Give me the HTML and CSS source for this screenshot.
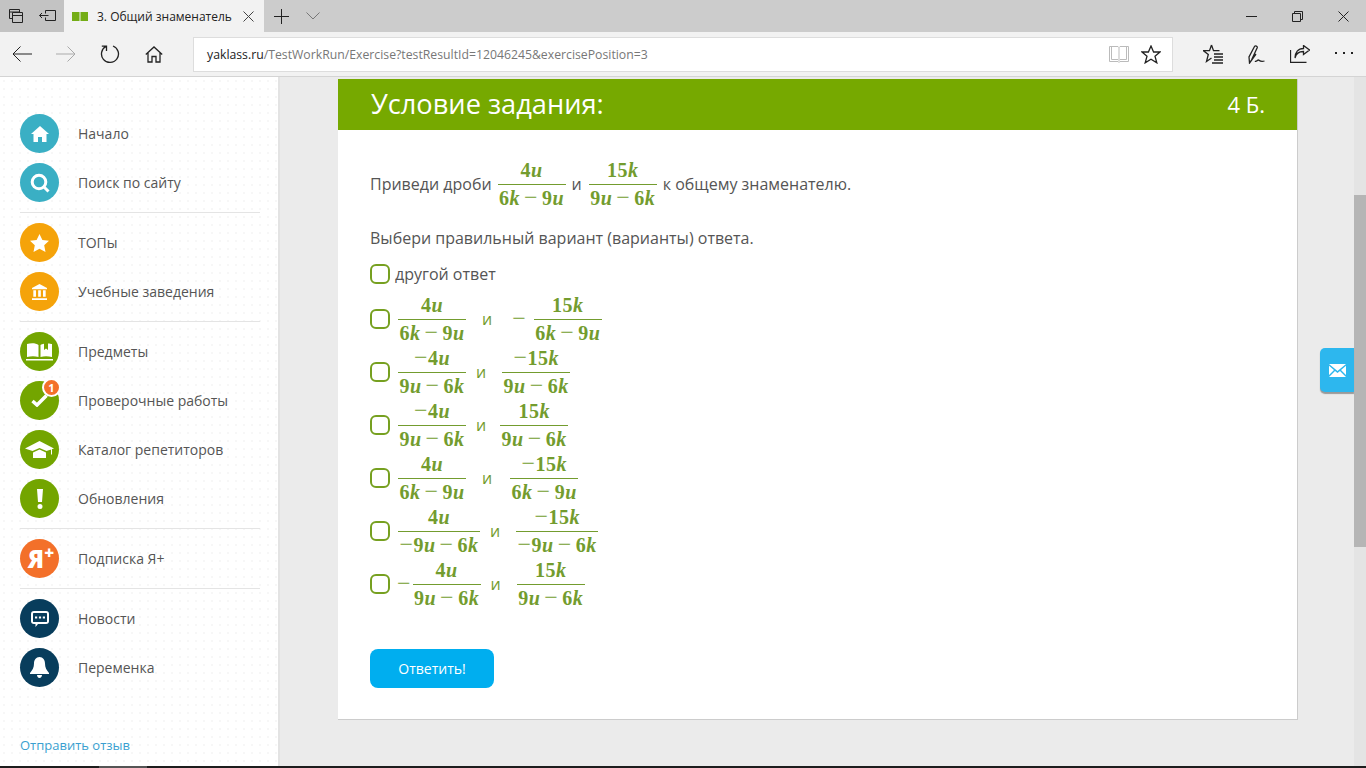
FILE: index.html
```html
<!DOCTYPE html>
<html lang="ru">
<head>
<meta charset="utf-8">
<title>3. Общий знаменатель</title>
<link rel="stylesheet" href="styles.css">
</head>
<body>
<header class="tabstrip">
  <div class="tabctl">
    <span class="tb32"><svg width="18" height="18" viewBox="0 0 18 18" class="ic"><path d="M2.5 2.5h10v3M2.5 2.500v9h3M2.500 5h10M5.500 5.500h10v10h-10zM5.500 8.500h10"/></svg></span>
    <span class="tb32"><svg width="18" height="14" viewBox="0 0 18 14" class="ic"><path d="M6.500 1.500h10v10h-10v-3M6.500 1.500v3M.5 6.500h9M3 4l-2.500 2.500L3 9"/></svg></span>
  </div>
  <div class="tab">
    <svg width="16" height="9" viewBox="0 0 16 9" class="tabicon"><path d="M0 0h7.500v9H0zM8.500 0H16v9H8.500z" fill="#74ad16"/></svg>
    <span class="tabtitle">3. Общий знаменатель</span>
    <svg width="11" height="11" viewBox="0 0 11 11" class="ic tabclose"><path d="M.5.500l10 10M10.500.500l-10 10"/></svg>
  </div>
  <span class="newtab"><svg width="15" height="15" viewBox="0 0 15 15" class="ic"><path d="M7.500 0v15M0 7.500h15"/></svg></span>
  <span class="tabmenu"><svg width="14" height="8" viewBox="0 0 14 8" class="ic soft"><path d="M.5.500L7 7l6.500-6.500"/></svg></span>
  <div class="winctl">
    <span class="wb"><svg width="11" height="1" viewBox="0 0 11 1" class="ic"><path d="M0 .5h11"/></svg></span>
    <span class="wb"><svg width="11" height="11" viewBox="0 0 11 11" class="ic"><path d="M.5 2.500h8v8h-8zM2.500 2.500v-2h8v8h-2"/></svg></span>
    <span class="wb"><svg width="11" height="11" viewBox="0 0 11 11" class="ic"><path d="M.5.500l10 10M10.500.500l-10 10"/></svg></span>
  </div>
</header>

<nav class="toolbar">
  <span class="nb"><svg width="20" height="16" viewBox="0 0 20 16" class="ic"><path d="M20 8H1M8.500.5L1 8l7.500 7.500"/></svg></span>
  <span class="nb"><svg width="20" height="16" viewBox="0 0 20 16" class="ic off"><path d="M0 8h19M11.500.5L19 8l-7.500 7.500"/></svg></span>
  <span class="nb"><svg width="20" height="20" viewBox="0 0 20 20" class="ic med"><path d="M6.500 2.200A8.500 8.500 0 1 0 13 2M6.500 7V2.200H1.800"/></svg></span>
  <span class="nb"><svg width="18" height="17" viewBox="0 0 18 17" class="ic med"><path d="M.8 8.500L9 1l8.200 7.500M3 7v9h4v-5.500h4V16h4V7"/></svg></span>
  <div class="address">
    <span class="url"><span class="host">yaklass.ru</span>/TestWorkRun/Exercise?testResultId=12046245&amp;exercisePosition=3</span>
    <svg width="20" height="17" viewBox="0 0 20 17" class="ic faint"><path d="M.5.500h8.500l1 1 1-1h8.500v15H11l-1 1-1-1H.5zM10 1.500v14M2.500.5v13H9M17.500.5v13H11"/></svg>
    <svg width="20" height="19" viewBox="0 0 20 19" class="ic med addr-star"><path d="M10 1l2.600 6H19l-5 4.200 1.800 6.600L10 14.200l-5.800 3.600L6 11.200 1 7h6.400z"/></svg>
  </div>
  <span class="nb hub"><svg width="20" height="20" viewBox="0 0 20 20" class="ic med"><path d="M8.500 1l2 5.700h6M8.500 1l-2 5.700H.5l4.800 3.800-1.800 7L8.500 14M11 10h9M11 13h9M11 16h9M9 19h11"/></svg></span>
  <span class="nb pen"><svg width="18" height="19" viewBox="0 0 18 19" class="ic med"><path d="M1.500 18L1 12 6.500 1.500c.8-1.300 3.200-.3 2.700 1.200L3.500 15zM1.500 18L8 9M7 16c1.500 1.500 2.500-2 4-.8s2 1.800 5.500.8"/></svg></span>
  <span class="nb share"><svg width="20" height="18" viewBox="0 0 20 18" class="ic med"><path d="M.5 5v12.500h16M5 13c1-4.500 4-6.500 8.500-6.500V9.500L19.500 5 13.500.5v3C8 3.500 5 7.500 5 13z"/></svg></span>
  <span class="nb more"><span class="dot"></span><span class="dot"></span><span class="dot"></span></span>
</nav>

<div class="page">
  <aside class="sidebar">
    <ul class="menu">
      <li class="item"><span class="circle teal"><svg width="18" height="16" viewBox="0 0 18 16" class="fill"><path d="M9 0L0 8h2.500v8h4.500v-5h4v5h4.500V8H18z"/></svg></span>Начало</li>
      <li class="item"><span class="circle teal"><svg width="20" height="20" viewBox="0 0 20 20" class="line3"><circle cx="9" cy="9" r="6.800"/><path d="M13.500 13.500l5 5"/></svg></span>Поиск по сайту</li>
      <li class="sep"></li>
      <li class="item"><span class="circle amber"><svg width="19" height="18" viewBox="0 0 19 18" class="fill"><path d="M9.500 0l2.900 6 6.600.8-4.800 4.500 1.300 6.700-6-3.300-6 3.300 1.300-6.700L0 6.800 6.600 6z"/></svg></span>ТОПы</li>
      <li class="item"><span class="circle amber"><svg width="15" height="18" viewBox="0 0 17 18" class="fill"><path d="M8.500 0L17 4.500V6H0V4.500zM1.500 7h3v7.500h-3zM7 7h3v7.500H7zM12.500 7h3v7.500h-3zM0 16h17v2H0z"/></svg></span>Учебные заведения</li>
      <li class="sep"></li>
      <li class="item"><span class="circle green"><svg width="27" height="18" viewBox="0 0 27 18" class="fill"><path d="M1 1c4-1 9-1 11.500 1v12C9 13 5 13 1 14zM14.500 2c1-.7 2-1 3.500-1.300V7l2-1.500L22 7V.4c1.500 0 3 .3 4 .6v13c-4-1-8-1-11.500 0zM0 16h27v1.500H0z"/></svg></span>Предметы</li>
      <li class="item"><span class="circle green"><svg width="17" height="13" viewBox="0 0 17 13" class="line3b"><path d="M1.500 7l4.500 4L15.500 1.500"/></svg><span class="badge">1</span></span>Проверочные работы</li>
      <li class="item"><span class="circle green"><svg width="29" height="18" viewBox="0 0 29 18" class="fill"><path d="M14.500 0L29 7.500 21.500 10 14.500 7 7.500 10 0 7.500zM8 11.500l6.500-3 6.500 3V17H8zM26 8.500h1v5h-1z"/></svg></span>Каталог репетиторов</li>
      <li class="item"><span class="circle green"><svg width="6" height="20" viewBox="0 0 6 20" class="fill"><path d="M0 0h6L5 13H1zM3 15a2.500 2.500 0 1 1 0 5 2.500 2.500 0 0 1 0-5z"/></svg></span>Обновления</li>
      <li class="sep"></li>
      <li class="item"><span class="circle orange"><span class="yaplus">Я<sup class="plus">+</sup></span></span>Подписка Я+</li>
      <li class="sep"></li>
      <li class="item"><span class="circle navy"><svg width="18" height="16" viewBox="0 0 18 16"><path fill="#fff" d="M3 0h12a3 3 0 0 1 3 3v7a3 3 0 0 1-3 3H7l-2.500 3v-3H3a3 3 0 0 1-3-3V3a3 3 0 0 1 3-3z"/><path fill="#083d5c" d="M2.500 2h13a.5.5 0 0 1 .5.500v8a.5.5 0 0 1-.5.500h-13a.5.5 0 0 1-.5-.500v-8a.5.5 0 0 1 .5-.500z"/><path fill="#fff" d="M4 5.500h2.200v2H4zM7.900 5.500h2.200v2H7.900zM11.800 5.500H14v2h-2.200z"/></svg></span>Новости</li>
      <li class="item"><span class="circle navy"><svg width="19" height="21" viewBox="0 0 19 21" class="fill"><path d="M9.500 0c3.500 0 5.500 3 5.500 6.500 0 4 1.500 6.500 4 9.500v1H0v-1c2.500-3 4-5.500 4-9.500C4 3 6 0 9.500 0zM7 18h5c0 1.500-1 3-2.500 3S7 19.500 7 18z"/></svg></span>Переменка</li>
    </ul>
    <a class="feedback">Отправить отзыв</a>
  </aside>

  <main class="main">
    <section class="card">
      <div class="cardhead"><h1 class="title">Условие задания:</h1><span class="score">4 Б.</span></div>
      <div class="cardbody">
        <div class="task">Приведи дроби
          <span class="frac w68"><span class="num">4<i>u</i></span><span class="den">6<i>k</i><span class="op">−</span>9<i>u</i></span></span>
          и
          <span class="frac w68 after1"><span class="num">15<i>k</i></span><span class="den">9<i>u</i><span class="op">−</span>6<i>k</i></span></span>
          к общему знаменателю.</div>
        <p class="hint">Выбери правильный вариант (варианты) ответа.</p>
        <div class="plain"><span class="check"></span>другой ответ</div>

        <div class="opt"><span class="check"></span>
          <span class="frac w68"><span class="num">4<i>u</i></span><span class="den">6<i>k</i><span class="op">−</span>9<i>u</i></span></span>
          <span class="and and-wide">и</span><span class="minus">−</span>
          <span class="frac w68"><span class="num">15<i>k</i></span><span class="den">6<i>k</i><span class="op">−</span>9<i>u</i></span></span>
        </div>
        <div class="opt"><span class="check"></span>
          <span class="frac w68"><span class="num"><span class="neg">−</span>4<i>u</i></span><span class="den">9<i>u</i><span class="op">−</span>6<i>k</i></span></span>
          <span class="and and-narrow">и</span>
          <span class="frac w68 after6"><span class="num"><span class="neg">−</span>15<i>k</i></span><span class="den">9<i>u</i><span class="op">−</span>6<i>k</i></span></span>
        </div>
        <div class="opt"><span class="check"></span>
          <span class="frac w68"><span class="num"><span class="neg">−</span>4<i>u</i></span><span class="den">9<i>u</i><span class="op">−</span>6<i>k</i></span></span>
          <span class="and and-narrow">и</span>
          <span class="frac w68 after4"><span class="num">15<i>k</i></span><span class="den">9<i>u</i><span class="op">−</span>6<i>k</i></span></span>
        </div>
        <div class="opt"><span class="check"></span>
          <span class="frac w68"><span class="num">4<i>u</i></span><span class="den">6<i>k</i><span class="op">−</span>9<i>u</i></span></span>
          <span class="and and-wide">и</span>
          <span class="frac w68 after2"><span class="num"><span class="neg">−</span>15<i>k</i></span><span class="den">6<i>k</i><span class="op">−</span>9<i>u</i></span></span>
        </div>
        <div class="opt"><span class="check"></span>
          <span class="frac w82"><span class="num">4<i>u</i></span><span class="den"><span class="neg">−</span>9<i>u</i><span class="op">−</span>6<i>k</i></span></span>
          <span class="and and-narrow">и</span>
          <span class="frac w82 after6"><span class="num"><span class="neg">−</span>15<i>k</i></span><span class="den"><span class="neg">−</span>9<i>u</i><span class="op">−</span>6<i>k</i></span></span>
        </div>
        <div class="opt"><span class="check lead-check"></span>
          <span class="minus lead">−</span>
          <span class="frac w68"><span class="num">4<i>u</i></span><span class="den">9<i>u</i><span class="op">−</span>6<i>k</i></span></span>
          <span class="and and-narrow">и</span>
          <span class="frac w68 after6"><span class="num">15<i>k</i></span><span class="den">9<i>u</i><span class="op">−</span>6<i>k</i></span></span>
        </div>

        <button class="submit" type="button">Ответить!</button>
      </div>
    </section>
    <div class="chat"><svg width="17" height="13" viewBox="0 0 17 13"><path fill="#fff" d="M0 0h17L8.500 7zM0 1.800l5 4.200-5 5zM17 1.800L12 6l5 5zM6 7l2.500 2L11 7l6 6H0z"/></svg></div>
  </main>

  <div class="scrollbar"><span class="thumb"></span></div>
</div>
<footer class="taskbar"><span class="taskthumb"></span></footer>
</body>
</html>
```

FILE: styles.css
```css
* { box-sizing: border-box; }
html, body { margin: 0; height: 768px; overflow: hidden; }
body { font-family: "Open Sans", "Noto Sans", sans-serif; color: #555; background: #ebebeb; display: flex; flex-direction: column; }
svg { display: block; flex: none; }
.ic { fill: none; stroke: #222; stroke-width: 1; }
.ic.med { stroke-width: 1.300; }
.ic.soft { stroke: #777; }
.ic.off { stroke: #aaa; }
.ic.faint { stroke: #bbb; }
.fill { fill: #fff; }
.line3 { fill: none; stroke: #fff; stroke-width: 3; }
.line3b { fill: none; stroke: #fff; stroke-width: 3.500; }

.tabstrip { height: 32px; flex: none; display: flex; background: #ccc; }
.tabctl { width: 64px; display: flex; background: #c3c3c3; }
.tb32 { width: 32px; display: flex; align-items: center; justify-content: center; }
.tab { width: 200px; background: #f2f2f2; display: flex; align-items: center; padding-left: 8px; }
.tabtitle { margin-left: 9px; font-size: 12px; color: #222; white-space: nowrap; width: 146px; }
.tabclose { stroke: #444; }
.newtab { width: 34px; display: flex; align-items: center; justify-content: center; }
.tabmenu { width: 30px; display: flex; align-items: center; justify-content: center; }
.winctl { margin-left: auto; display: flex; }
.wb { width: 46px; display: flex; align-items: center; justify-content: center; }

.toolbar { height: 45px; flex: none; display: flex; align-items: flex-start; background: #f2f2f2; border-bottom: 1px solid #d4d4d4; }
.nb { width: 44px; height: 44px; display: flex; align-items: center; justify-content: center; }
.address { width: 980px; height: 35px; margin: 5px 0 0 17px; background: #fff; border: 1px solid #ddd; display: flex; align-items: center; padding: 0 11px 0 13px; }
.url { font-size: 12.250px; color: #777; flex: 1; white-space: nowrap; }
.host { color: #222; }
.addr-star { margin-left: 12px; }
.hub { margin-left: 18px; }
.share { margin-left: -1px; }
.more { gap: 6px; margin-top: -1px; }
.dot { width: 2px; height: 2px; background: #222; }

.page { flex: 1; min-height: 0; display: flex; }
.sidebar { width: 280px; flex: none; background-color: #fff; background-image: radial-gradient(#f7f7f7 1px, transparent 1.200px); background-size: 8px 8px; border-right: 2px solid #e3e3e3; padding: 37px 18px 0 20px; display: flex; flex-direction: column; }
.menu { list-style: none; margin: 0; padding: 0; display: flex; flex-direction: column; gap: 10px; }
.item { height: 39px; display: flex; align-items: center; font-size: 14px; color: #555; }
.sep { height: 1px; background: #e4e4e4; }
.circle { position: relative; width: 39px; height: 39px; border-radius: 50%; margin-right: 19px; display: flex; align-items: center; justify-content: center; flex: none; }
.teal { background: #3aafc4; }
.amber { background: #f5a30a; }
.green { background: #73a500; }
.orange { background: #f3702a; }
.navy { background: #083d5c; }
.badge { position: absolute; left: 22px; top: -3px; width: 19px; height: 19px; border: 2px solid #fff; border-radius: 50%; background: #f3702a; color: #fff; font-size: 11px; font-weight: 700; line-height: 15px; text-align: center; }
.yaplus { color: #fff; font-weight: 800; font-size: 24px; line-height: 1; margin-left: 3px; display: flex; align-items: flex-start; }
.plus { font-size: 17px; font-weight: 800; line-height: 1; margin: -3px 0 0 0; vertical-align: baseline; }
.feedback { margin-top: auto; margin-bottom: 12px; font-size: 13px; color: #3a9fd0; }

.main { position: relative; flex: 1; min-width: 0; padding: 2px 0 0 58px; }
.card { width: 960px; height: 641px; background: #fff; border-right: 1px solid #ccc; border-bottom: 1px solid #ccc; }
.cardhead { height: 51px; background: #76a900; color: #fff; display: flex; align-items: center; justify-content: space-between; padding: 0 32px 2px 33px; }
.title { margin: 0; font-size: 27.200px; font-weight: 400; line-height: 1; }
.score { font-size: 22px; }
.cardbody { padding: 28px 32px 0 32px; font-size: 16px; color: #555; }
.task { display: flex; align-items: center; gap: 6px; height: 51px; white-space: nowrap; }
.hint { margin: 17px 0 14px; line-height: 24px; height: 24px; }
.plain { display: flex; align-items: center; height: 20px; margin-bottom: 8px; }
.check { width: 20px; height: 20px; border: 2px solid #76a020; border-radius: 6px; margin-right: 5px; flex: none; background: #fff; }
.opt { display: flex; align-items: center; height: 53px; }
.opt .check { margin-right: 8px; }
.opt .lead-check { margin-right: 7px; }

.frac { display: inline-flex; flex-direction: column; align-items: center; font-family: "Liberation Serif", serif; font-size: 20px; font-weight: 700; color: #739c2e; height: 53px; flex: none; letter-spacing: .5px; }
.frac i { font-style: italic; }
.w68 { width: 68px; }
.w82 { width: 82px; }
.num { height: 28px; line-height: 27px; width: 100%; text-align: center; border-bottom: 1px solid #739c2e; white-space: nowrap; }
.den { height: 25px; line-height: 20px; white-space: nowrap; }
.op { font-weight: 400; font-size: 24px; line-height: 1; margin: 0 4px; }
.neg { font-weight: 400; font-size: 24px; line-height: 1; }
.and { color: #739c2e; font-size: 16px; flex: none; }
.and-wide { margin: 0 16px; }
.and-narrow { margin: 0 10px; }
.minus { font-family: "Liberation Serif", serif; font-size: 24px; color: #739c2e; flex: none; margin: 0 8px 0 4px; }
.minus.lead { margin: 0 2px 0 0; }
.after1 { margin-left: 1px; }
.after2 { margin-left: 2px; }
.after4 { margin-left: 4px; }
.after6 { margin-left: 6px; }

.submit { display: block; margin-top: 39px; width: 124px; height: 39px; border: 0; border-radius: 8px; background: #00aeef; color: #fff; font-family: inherit; font-size: 14px; }
.chat { position: absolute; right: 0; top: 271px; width: 34px; height: 44px; background: #2db7ee; border-radius: 5px 0 0 5px; box-shadow: 0 2px 1px #999; display: flex; align-items: center; justify-content: center; }

.scrollbar { width: 12px; flex: none; background: #e4e4e4; padding-top: 118px; }
.thumb { display: block; height: 352px; background: #b5b5b5; }
.taskbar { height: 2px; flex: none; background: #1d1d1d; padding-left: 99px; }
.taskthumb { display: block; width: 48px; height: 2px; background: #555; }
```
